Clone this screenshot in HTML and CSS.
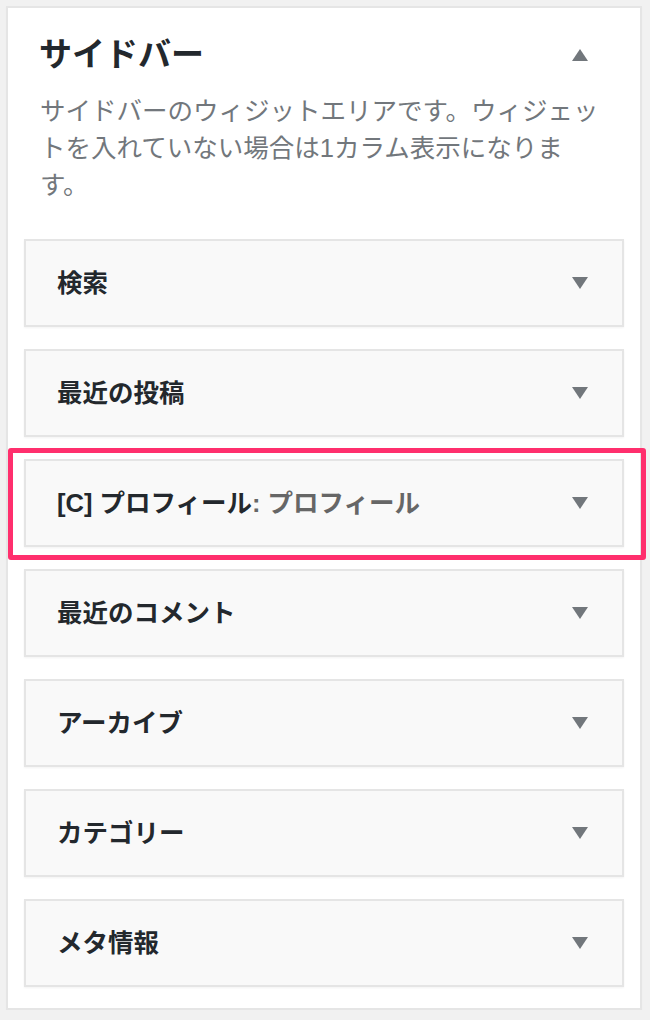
FILE: index.html
```html
<!DOCTYPE html>
<html lang="ja">
<head>
<meta charset="utf-8">
<title>サイドバー</title>
<link rel="stylesheet" href="styles.css">
</head>
<body>
<div class="panel">
  <div class="panel-head">
    <h2 class="panel-title">サイドバー</h2>
    <svg class="arrow" width="16" height="12" viewBox="0 0 16 12"><polygon points="8,0 16,12 0,12"/></svg>
  </div>
  <p class="panel-desc">サイドバーのウィジットエリアです。ウィジェットを入れていない場合は1カラム表示になります。</p>
  <div class="widgets">
    <div class="widget"><h3 class="widget-title">検索</h3><svg class="arrow" width="16" height="12" viewBox="0 0 16 12"><polygon points="0,0 16,0 8,12"/></svg></div>
    <div class="widget"><h3 class="widget-title">最近の投稿</h3><svg class="arrow" width="16" height="12" viewBox="0 0 16 12"><polygon points="0,0 16,0 8,12"/></svg></div>
    <div class="widget highlighted"><h3 class="widget-title">[C] プロフィール<span class="in-title">: プロフィール</span></h3><svg class="arrow" width="16" height="12" viewBox="0 0 16 12"><polygon points="0,0 16,0 8,12"/></svg><div class="mark"></div></div>
    <div class="widget"><h3 class="widget-title">最近のコメント</h3><svg class="arrow" width="16" height="12" viewBox="0 0 16 12"><polygon points="0,0 16,0 8,12"/></svg></div>
    <div class="widget"><h3 class="widget-title">アーカイブ</h3><svg class="arrow" width="16" height="12" viewBox="0 0 16 12"><polygon points="0,0 16,0 8,12"/></svg></div>
    <div class="widget"><h3 class="widget-title">カテゴリー</h3><svg class="arrow" width="16" height="12" viewBox="0 0 16 12"><polygon points="0,0 16,0 8,12"/></svg></div>
    <div class="widget"><h3 class="widget-title">メタ情報</h3><svg class="arrow" width="16" height="12" viewBox="0 0 16 12"><polygon points="0,0 16,0 8,12"/></svg></div>
  </div>
</div>
</body>
</html>
```
FILE: styles.css
```css
* { box-sizing: border-box; }
html, body { margin: 0; padding: 0; }
body {
  background: #f1f1f1;
  font-family: "Liberation Sans", "Noto Sans CJK JP", sans-serif;
  color: #23282d;
}
.panel {
  margin: 6px 0 0 6px;
  width: 636px;
  background: #fff;
  border: 2px solid #e5e5e5;
  box-shadow: 0 1px 1px rgba(0,0,0,.04);
}
.panel-head {
  display: flex;
  align-items: center;
  justify-content: space-between;
  height: 75px;
  padding: 19px 52px 0 31px;
}
.panel-title {
  margin: 0;
  font-size: 33px;
  line-height: 56px;
  font-weight: 700;
  color: #23282d;
}
.arrow { display: block; fill: #72777c; flex: none; }
.panel-desc {
  margin: 10px 0 0 32px;
  width: 568px;
  font-size: 25.5px;
  line-height: 37px;
  color: #72777c;
}
.widgets {
  margin-top: 35px;
  padding: 0 16px;
}
.widget {
  position: relative;
  display: flex;
  align-items: center;
  justify-content: space-between;
  height: 88px;
  margin-bottom: 22px;
  padding: 0 34px 0 31px;
  background: #f9f9f9;
  border: 2px solid #e5e5e5;
  box-shadow: 0 1px 2px rgba(0,0,0,.05);
}
.widget:last-child { margin-bottom: 21px; }
.widget-title {
  margin: 0;
  font-size: 25.5px;
  line-height: 36px;
  font-weight: 700;
  color: #23282d;
}
.in-title { color: #666; }
.mark {
  position: absolute;
  left: -18px;
  top: -13px;
  right: -24px;
  bottom: -15px;
  border: 5px solid #ff2f6d;
  border-radius: 3px;
  pointer-events: none;
}
```
